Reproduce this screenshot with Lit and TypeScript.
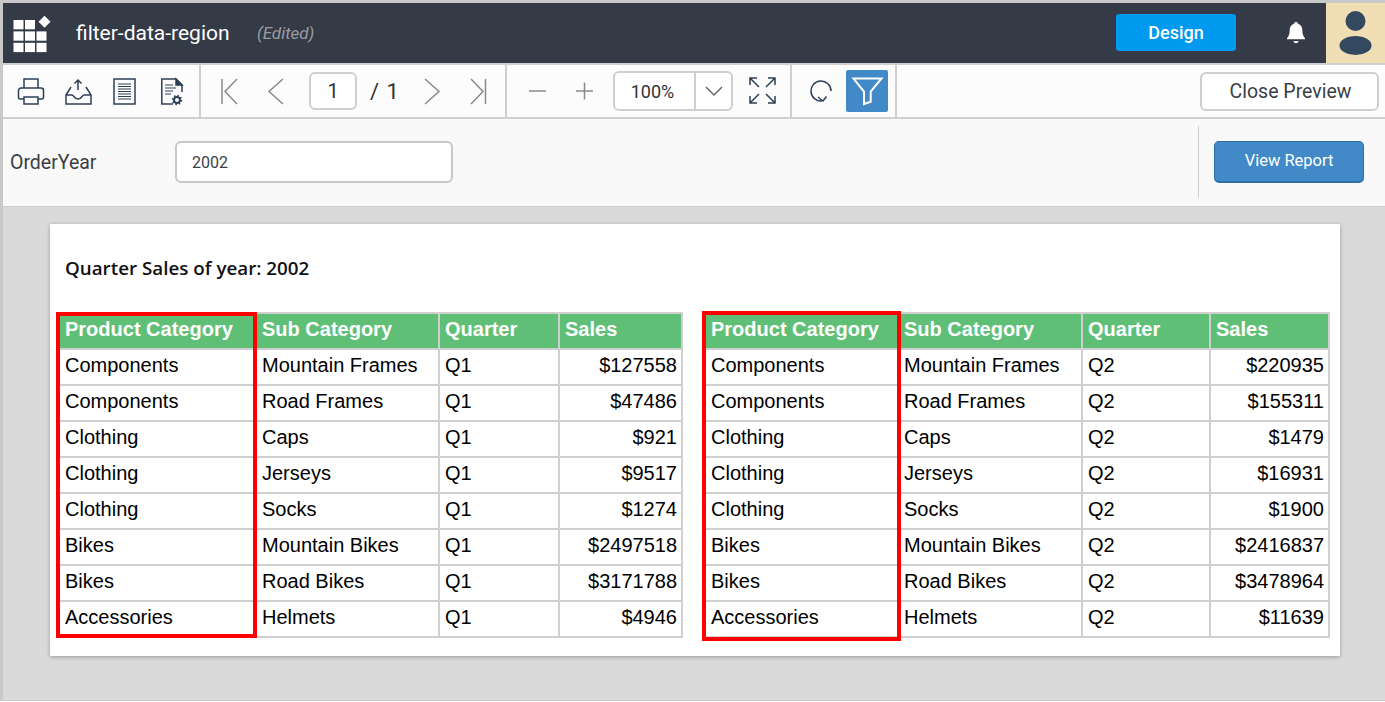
import { LitElement, html, css, svg } from "lit";
import { customElement } from "lit/decorators.js";

const cats = ["Components","Components","Clothing","Clothing","Clothing","Bikes","Bikes","Accessories"];
const subs = ["Mountain Frames","Road Frames","Caps","Jerseys","Socks","Mountain Bikes","Road Bikes","Helmets"];
const q1 = ["$127558","$47486","$921","$9517","$1274","$2497518","$3171788","$4946"];
const q2 = ["$220935","$155311","$1479","$16931","$1900","$2416837","$3478964","$11639"];

const i = (w: number, h: number, body: unknown, cls = "") =>
  html`<svg class=${cls} width=${w} height=${h} viewBox="0 0 ${w} ${h}" fill="none" stroke="currentColor" stroke-width="1.5">${body}</svg>`;

@customElement("app-root")
export class AppRoot extends LitElement {
  static styles = css`
    :host { display: block; width: 1385px; height: 702px; overflow: hidden; font-family: Roboto, sans-serif; background: #fff; }
    .frame { height: 701px; border-top: 3px solid #c9c9c9; border-left: 3px solid #c9c9c9; border-bottom: 1px solid #c9c9c9; box-sizing: border-box; display: flex; flex-direction: column; background: #dadada; }
    .head { height: 60px; flex: none; background: #343a46; display: flex; align-items: center; color: #fff; border-bottom: 2px solid #cfcfcf; box-sizing: content-box; }
    .logo { margin-left: 10px; width: 40px; height: 40px; flex: none; }
    .name { margin-left: 23px; font-size: 21px; width: 181px; }
    .edited { font-style: italic; font-size: 17px; color: #9a9da4; flex: 1; }
    .design { width: 120px; height: 37px; margin-bottom: 2px; background: #0099f0; border-radius: 3px; display: flex; align-items: center; justify-content: center; font-size: 18px; font-weight: 500; color: #fff; }
    .bell { margin-left: 48px; width: 24px; height: 24px; flex: none; }
    .avatar { margin-left: 18px; width: 59px; height: 60px; background: #f0deb4; flex: none; display: flex; align-items: center; justify-content: center; }
    .tools { height: 52px; flex: none; background: #fcfcfc; display: flex; align-items: center; border-bottom: 2px solid #cfcfcf; color: #333; }
    .sect { height: 52px; display: flex; align-items: center; border-right: 2px solid #cfcfcf; flex: none; box-sizing: border-box; }
    .s1 { width: 198px; padding-left: 14px; gap: 20px; color: #2d3f55; }
    .s2 { width: 306px; padding-left: 19px; color: #8a8a8a; }
    .s3 { width: 285px; padding-left: 21px; color: #8a8a8a; }
    .s4 { width: 105px; padding-left: 18px; gap: 12px; }
    .first { margin-right: 29px; }
    .prev { margin-right: 24px; }
    .next { margin-right: 28px; }
    .minus { margin-right: 27px; }
    .page { width: 48px; height: 38px; margin-right: 13px; border: 2px solid #cfcfcf; border-radius: 6px; box-sizing: border-box; background: #fff; color: #333; font-size: 20px; display: flex; align-items: center; justify-content: center; flex: none; }
    .tot { color: #333; font-size: 22px; width: 53px; flex: none; letter-spacing: 1px; }
    .zoom { margin-left: 18px; margin-right: 16px; width: 120px; height: 40px; border: 2px solid #cfcfcf; border-radius: 6px; box-sizing: border-box; background: #fff; display: flex; flex: none; }
    .zv { flex: 1; display: flex; align-items: center; justify-content: center; padding-right: 4px; font-size: 18px; color: #333; border-right: 2px solid #cfcfcf; }
    .zc { width: 35px; display: flex; align-items: center; justify-content: center; color: #666; }
    .fit { color: #2d3f55; flex: none; }
    .ref { color: #2d3f55; flex: none; }
    .funnel { width: 42px; height: 42px; background: #4189c7; border-radius: 2px; display: block; color: #fff; flex: none; }
    .grow { flex: 1; }
    .close { width: 179px; height: 39px; margin-right: 6px; padding-left: 2px; border: 2px solid #cfcfcf; border-radius: 6px; box-sizing: border-box; background: #fff; color: #3a3f47; font-size: 19.500px; display: flex; align-items: center; justify-content: center; }
    .params { height: 88px; flex: none; box-sizing: border-box; padding-bottom: 1px; background: #f9f9f9; border-bottom: 1px solid #cfcfcf; display: flex; align-items: center; }
    .label { margin-left: 7px; width: 165px; font-size: 19.500px; color: #3a3f47; }
    .input { width: 278px; height: 42px; border: 2px solid #c8c8c8; border-radius: 6px; box-sizing: border-box; background: #fff; padding-left: 15px; display: flex; align-items: center; font-size: 16px; color: #3a3f47; }
    .pdiv { width: 1px; height: 72px; background: #cfcfcf; margin-right: 15px; }
    .view { width: 150px; height: 42px; margin-right: 21px; box-sizing: border-box; padding-bottom: 2px; background: #4189c7; border: 1px solid #2f6fa8; border-bottom-width: 2px; border-radius: 5px; color: #fff; font-size: 16.500px; display: flex; align-items: center; justify-content: center; }
    .canvas { flex: 1; padding: 17px 42px 0 47px; }
    .card { width: 1290px; height: 432px; background: #fff; box-shadow: 0 1px 4px rgba(0,0,0,.3); padding: 0 8px; box-sizing: border-box; }
    .title { font-family: "Open Sans", sans-serif; font-weight: 600; font-size: 18.800px; color: #111; height: 88px; padding-top: 32px; padding-left: 7px; box-sizing: border-box; line-height: 25px; }
    .tables { display: flex; }
    .tw { position: relative; flex: none; }
    .t1 { width: 623px; margin-right: 23px; }
    .t2 { width: 624px; }
    table { border-collapse: collapse; table-layout: fixed; width: 100%; font-family: "Liberation Sans", Arial, sans-serif; font-size: 20px; color: #000; }
    td, th { border: 2px solid #d0d0d0; height: 36px; padding: 0 4px 4px 5px; box-sizing: border-box; text-align: left; font-weight: 400; white-space: nowrap; }
    th { background: #5fbf77; color: #fff; font-weight: 700; }
    td.r { text-align: right; }
    .hl { position: absolute; left: -2px; top: 0; height: 326px; border: 4px solid #f00; box-sizing: border-box; }
    .t1 .hl { width: 201px; }
    .t2 .hl { top: -1px; height: 330px; width: 199px; }
  `;

  table(cls: string, widths: number[], q: string, vals: string[]) {
    return html`<div class="tw ${cls}">
      <table>
        <colgroup>${widths.map((w) => html`<col style="width:${w}px" />`)}</colgroup>
        <tr><th>Product Category</th><th>Sub Category</th><th>Quarter</th><th>Sales</th></tr>
        ${cats.map((c, n) => html`<tr><td>${c}</td><td>${subs[n]}</td><td>${q}</td><td class="r">${vals[n]}</td></tr>`)}
      </table>
      <div class="hl"></div>
    </div>`;
  }

  render() {
    return html`<div class="frame">
      <div class="head">
        <svg class="logo" viewBox="0 0 40 40" fill="#fff">
          ${[0, 1, 2].flatMap((r) => [0, 1, 2].map((c) => (r === 0 && c === 2 ? svg`` : svg`<rect x=${0.5 + c * 11.5} y=${7 + r * 11.4} width="10" height="9.300"></rect>`)))}
          <path d="M31.500 2.700l6 6-6 6-6-6z"></path>
        </svg>
        <div class="name">filter-data-region</div>
        <div class="edited">(Edited)</div>
        <div class="design">Design</div>
        <svg class="bell" viewBox="0 0 24 24" fill="#fff"><path d="M12 1c1.200 0 2 .8 2 1.700 3 .9 4.300 3.500 4.300 6.300 0 4 1 6.200 2.700 8.200v1H3v-1c1.700-2 2.700-4.200 2.700-8.200 0-2.800 1.300-5.400 4.300-6.300C10 1.800 10.800 1 12 1z"></path><path d="M9.500 20h5c0 1.400-1.100 2.200-2.500 2.200S9.500 21.400 9.500 20z"></path></svg>
        <div class="avatar"><svg width="33" height="44" viewBox="0 0 33 44" fill="#33495f"><circle cx="16.500" cy="10" r="10"></circle><ellipse cx="16.500" cy="34.500" rx="16" ry="9.500"></ellipse></svg></div>
      </div>
      <div class="tools">
        <div class="sect s1">
          ${i(28, 30, svg`<path d="M7 12V3h14v9M7 23H3a1.500 1.500 0 0 1-1.500-1.500v-7A2.500 2.500 0 0 1 4 12h20a2.500 2.500 0 0 1 2.500 2.500v7A1.500 1.500 0 0 1 25 23h-4"></path><path d="M7 21h14v7H7z"></path>`)}
          ${i(28, 30, svg`<path d="M13 14V4M9.500 7.500L13 4l3.500 3.500M6 11l-5 8v9h25v-9l-5-8"></path><path d="M1 19h6c2 0 2 4 6 4s4-4 6-4h7"></path>`)}
          ${i(28, 30, svg`<path d="M1 3h21v25H1z"></path><path d="M5 8h13M5 10.500h13M5 13h13M5 15.500h13M5 18h13M5 20.500h13M5 23h13" stroke-width="1.200"></path>`)}
          ${i(28, 30, svg`<path d="M12 28H.8V3H15l6 6v7"></path><path d="M15 3l6 6h-6z" fill="currentColor"></path><path d="M4 9h8M4 12h11M4 15h8M4 18h6" stroke-width="1.200"></path><circle cx="16" cy="24" r="3" stroke-width="2"></circle><circle cx="16" cy="24" r="4.500" stroke-width="1.500" stroke-dasharray="1.500 2"></circle>`)}
        </div>
        <div class="sect s2">
          ${i(18, 30, svg`<path d="M2 3v25M17 3L5 15.500 17 28"></path>`, "first")}
          ${i(18, 30, svg`<path d="M16 3L2 15.500 16 28"></path>`, "prev")}
          <div class="page">1</div>
          <div class="tot">/ 1</div>
          ${i(18, 30, svg`<path d="M2 3l14 12.500L2 28"></path>`, "next")}
          ${i(18, 30, svg`<path d="M16.500 3v25M2 3l12 12.500L2 28"></path>`)}
        </div>
        <div class="sect s3">
          ${i(20, 30, svg`<path d="M1 15h17"></path>`, "minus")}
          ${i(20, 30, svg`<path d="M1 15h17M9.500 6.500v17"></path>`)}
          <div class="zoom"><div class="zv">100%</div><div class="zc">${i(18, 12, svg`<path d="M1 2l8 8 8-8"></path>`)}</div></div>
          ${i(28, 28, svg`<path d="M1 8V1h7M1 1l9 9M19 1h7v7M26 1l-9 9M1 19v7h7M1 26l9-9M19 26h7v-7M26 26l-9-9"></path>`, "fit")}
        </div>
        <div class="sect s4">
          ${i(24, 30, svg`<path d="M21 15A10 10 0 1 0 12 25"></path><path d="M8 21l5 4 3.500-4.500"></path>`, "ref")}
          <svg class="funnel" viewBox="0 0 42 42" fill="none" stroke="currentColor" stroke-width="2"><path d="M7.500 8.500h28L24.700 21.700v10L18 34V21.700z"></path></svg>
        </div>
        <div class="grow"></div>
        <div class="close">Close Preview</div>
      </div>
      <div class="params">
        <div class="label">OrderYear</div>
        <div class="input">2002</div>
        <div class="grow"></div>
        <div class="pdiv"></div>
        <div class="view">View Report</div>
      </div>
      <div class="canvas">
        <div class="card">
          <div class="title">Quarter Sales of year: 2002</div>
          <div class="tables">
            ${this.table("t1", [197, 183, 120, 123], "Q1", q1)}
            ${this.table("t2", [193, 184, 128, 119], "Q2", q2)}
          </div>
        </div>
      </div>
    </div>`;
  }
}
